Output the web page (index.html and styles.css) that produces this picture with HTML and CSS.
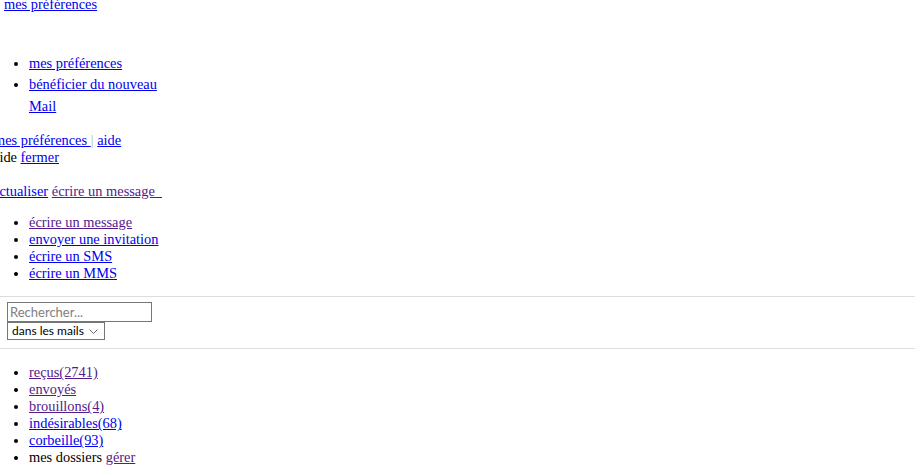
FILE: index.html
```html
<!DOCTYPE html>
<html lang="fr">
  <head>
    <meta charset="utf-8">
    <meta name="viewport" content="width=device-width, initial-scale=1, shrink-to-fit=no">
    <title>Mail Orange</title>
    <link rel="stylesheet" href="styles.css">
  </head>
  <body>
    <div class="top-link"><a href="#">mes préférences</a></div>

    <ul class="account">
        <li><a href="#">mes préférences</a></li>
        <li><a href="#">bénéficier du nouveau Mail</a></li>
    </ul>

    <div class="shortcuts">
        <a href="#">mes préférences </a><span class="sep">|</span> <a href="#">aide</a>
    </div>
    <div class="help">aide <a href="#">fermer</a></div>

    <div class="toolbar">
        <a href="#">actualiser</a> <a href="#" class="visited">écrire un message&nbsp;&nbsp;</a>
    </div>

    <ul class="compose">
        <li><a href="#" class="visited">écrire un message</a></li>
        <li><a href="#">envoyer une invitation</a></li>
        <li><a href="#">écrire un SMS</a></li>
        <li><a href="#">écrire un MMS</a></li>
    </ul>

    <form class="search">
        <input type="text" class="search-input" placeholder="Rechercher...">
        <span class="scope">
            <select class="search-scope">
                <option>dans les mails</option>
                <option>dans les contacts</option>
            </select>
            <svg class="chevron" width="9" height="6" viewBox="0 0 9 6"><path d="M0.5 0.5 L4.5 4.5 L8.5 0.5" fill="none" stroke="#666" stroke-width="1"/></svg>
        </span>
    </form>

    <ul class="folders">
        <li><a href="#" class="visited">reçus(2741)</a></li>
        <li><a href="#" class="visited">envoyés</a></li>
        <li><a href="#" class="visited">brouillons(4)</a></li>
        <li><a href="#">indésirables(68)</a></li>
        <li><a href="#">corbeille(93)</a></li>
        <li>mes dossiers <a href="#" class="visited">gérer</a></li>
    </ul>
  </body>
</html>
```

FILE: styles.css
```css
body {
    margin: 0;
    font-family: "Liberation Serif", "Times New Roman", serif;
    font-size: 14.4px;
    line-height: 17px;
    color: #000;
    overflow: hidden;
}
a {
    color: #0000ee;
}
a.visited {
    color: #551a8b;
}
ul {
    margin: 14.4px 0 0;
    padding-left: 29px;
}
.top-link {
    margin-top: -4.5px;
    padding-left: 4px;
}
.account {
    margin-top: 40px;
    width: 140px;
    line-height: 21.6px;
}
.shortcuts {
    margin-top: 14.4px;
    margin-left: -6px;
}
.sep {
    color: #bbb;
}
.help {
    margin-left: -7px;
}
.toolbar {
    margin-top: 17px;
    margin-left: -7px;
}
.search {
    margin: 14.4px 0 0;
    padding: 5px 0 8px 7px;
    border-top: 1px solid #ddd;
    border-bottom: 1px solid #ddd;
}
.search-input {
    display: block;
    box-sizing: border-box;
    width: 145px;
    height: 20px;
    margin: 0;
    padding: 0 2px;
    border: 1px solid #767676;
    font-family: Lato, "Liberation Sans", sans-serif;
    font-size: 13px;
}
.search-input::placeholder {
    color: #808080;
}
.scope {
    position: relative;
    display: block;
    width: 98px;
}
.search-scope {
    display: block;
    box-sizing: border-box;
    width: 98px;
    height: 18px;
    margin: 0;
    padding: 0 0 0 4px;
    border: 1px solid #767676;
    border-radius: 0;
    background: #fff;
    appearance: none;
    font-family: Lato, "Liberation Sans", sans-serif;
    font-size: 12px;
    line-height: 16px;
    color: #000;
}
.chevron {
    position: absolute;
    right: 7px;
    top: 7px;
    pointer-events: none;
}
.folders {
    margin-top: 15px;
}
```
